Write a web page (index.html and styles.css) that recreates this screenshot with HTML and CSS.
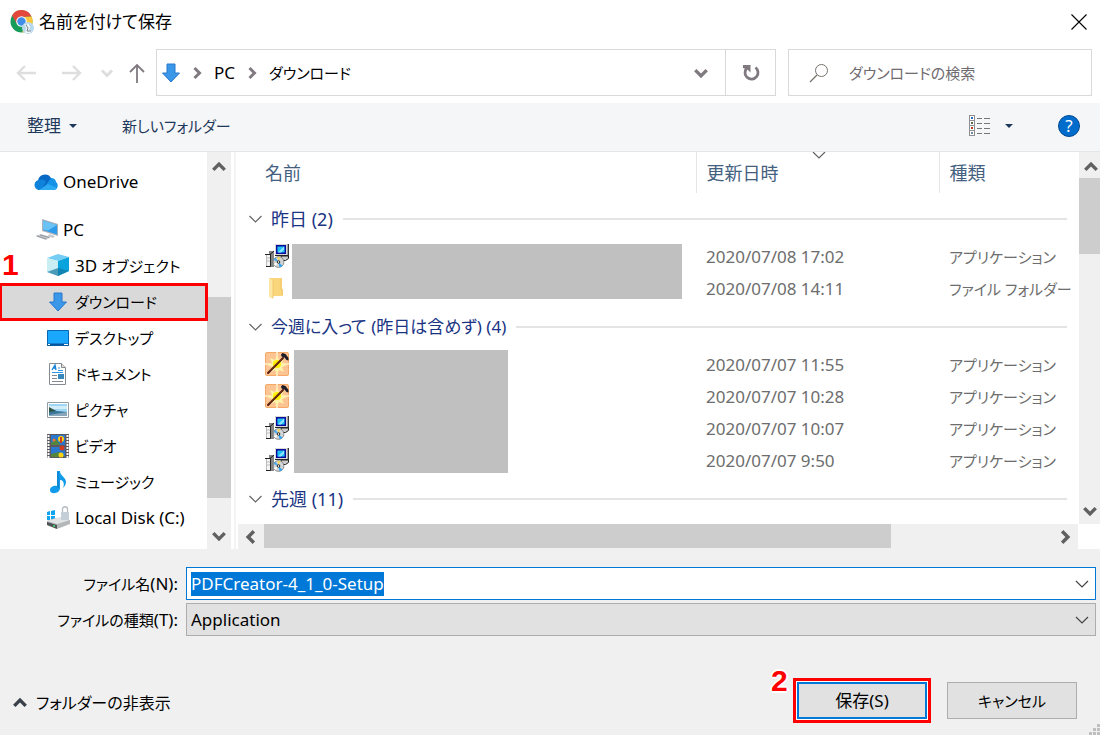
FILE: index.html
```html
<!DOCTYPE html>
<html lang="ja">
<head>
<meta charset="utf-8">
<title>名前を付けて保存</title>
<meta name="viewport" content="width=device-width, initial-scale=1">
<link rel="stylesheet" href="styles.css">
</head>
<body>
<svg class="defs" aria-hidden="true">
  <symbol id="down-arrow" viewBox="0 0 18 20"><path d="M5 1h8v9h4.500L9 19 .5 10H5z" fill="#3b98e8" stroke="#2878cd"/></symbol>
  <symbol id="bold-chevron" viewBox="0 0 14 14"><path d="M2 4.500 7 9.500l5-5" fill="none" stroke="currentColor" stroke-width="3"/></symbol>
  <symbol id="thin-chevron" viewBox="0 0 14 14"><path d="M1 4 7 10l6-6" fill="none" stroke="currentColor" stroke-width="1.200"/></symbol>
  <symbol id="installer" viewBox="0 0 24 24">
    <path d="M10 0h13v11H10z" fill="#d8d8d8"/><path d="M23.300 0v11.500H10" fill="none" stroke="#222" stroke-width="1.200"/>
    <path d="M11.700 1.700h8.600v7.600h-8.600z" fill="#1ec0f5" stroke="#0a0a9c" stroke-width="1.400"/><path d="M13 8.500l6-6v3l-3 3z" fill="#8fe6ff"/>
    <path d="M4 7h5v16H1V10h3z" fill="#858585"/><path d="M1.500 11h3.500v11H1.500z" fill="#f4f4f4"/><path d="M2 14h3M2 17h3" stroke="#bbb"/><path d="M5.500 10v12.500H1M0 10.500h5L9 7" stroke="#222" fill="none"/>
    <path d="M16 12h7.500v2.500l-3 2h-4z" fill="#ccc" stroke="#222"/>
    <circle cx="13.500" cy="18" r="5.400" fill="#d2d4d6" stroke="#777" stroke-width=".8"/><path d="M13.500 18 8.500 16l2-2.500z" fill="#48a8e8"/><path d="M13.500 18l-1-5h3z" fill="#f0d660"/><path d="M13.500 18l4 4-3 1.300z" fill="#26a2f4"/><path d="M13.500 18l-5 2 2 2z" fill="#fff"/>
    <circle cx="13.500" cy="18" r="1.300" fill="#fff" stroke="#222"/>
  </symbol>
  <symbol id="hammer" viewBox="0 0 24 24">
    <rect x=".5" y=".5" width="23" height="23" rx="1.500" fill="#fcc393" stroke="#f7a864"/>
    <path d="M11 0h2v24h-2zM0 11h24v2H0z" fill="#fde3b8"/>
    <path d="m12 3 2 5 5-2-2 5 5 2-5 2 2 5-5-2-2 5-2-5-5 2 2-5-5-2 5-2-2-5 5 2z" fill="#fff3a8"/><circle cx="12" cy="12" r="4" fill="#fff000"/>
    <path d="M3 21 18 6" stroke="#4a170c" stroke-width="2" stroke-linecap="round"/><path d="M4 19.500 17 6.500" stroke="#a24b1d" stroke-width=".8"/>
    <path d="m16 2.500 1.500-1.500 3 1L23.500 6v2.500l-2-.5-2-2.500-3-1z" fill="#1c1d2b"/>
  </symbol>
</svg>

<header class="titlebar">
  <svg class="app-icon" viewBox="0 0 24 24" aria-hidden="true">
    <circle cx="11.500" cy="11.500" r="11" fill="#179c5a"/>
    <path d="M2 5.500A11 11 0 0 1 21.500 6.500L11.500 7 7 14z" fill="#e2493c"/>
    <path d="M21.500 6.500A11 11 0 0 1 12 22.500l4-9L13 7z" fill="#fdc83e"/>
    <circle cx="11.500" cy="11.500" r="5.300" fill="#fff"/><circle cx="11.500" cy="11.500" r="4.200" fill="#3f8de8"/>
    <circle cx="18" cy="18" r="6" fill="#b7d9ed"/><path d="m14 14 3 1 1-2 2 4-1 3 3 1-2 2h-5l1-5z" fill="#f4f6f5"/><path d="m16 15 2 3-1 3h4" fill="none" stroke="#688292"/>
  </svg>
  <h1>名前を付けて保存</h1>
  <button class="close" aria-label="閉じる"><svg viewBox="0 0 16 16"><path d="m.5.500 15 15m0-15-15 15" stroke="#000" stroke-width="1.100"/></svg></button>
</header>

<nav class="navbar">
  <div class="history">
    <button class="faded" aria-label="戻る"><svg viewBox="0 0 20 18"><path d="M20 9H2m7-7L2 9l7 7" fill="none" stroke="currentColor" stroke-width="2.400"/></svg></button>
    <button class="faded" aria-label="進む"><svg viewBox="0 0 20 18"><path d="M0 9h18m-7-7 7 7-7 7" fill="none" stroke="currentColor" stroke-width="2.400"/></svg></button>
    <button class="faded recent" aria-label="最近の場所"><svg viewBox="0 0 14 14"><use href="#bold-chevron"/></svg></button>
    <button class="up" aria-label="上へ"><svg viewBox="0 0 18 20"><path d="M9 20V2M2 9l7-7 7 7" fill="none" stroke="currentColor" stroke-width="1.800"/></svg></button>
  </div>
  <div class="address">
    <svg class="address-icon" aria-hidden="true"><use href="#down-arrow"/></svg>
    <svg class="crumb-sep" aria-hidden="true"><use href="#bold-chevron"/></svg>
    <a href="#pc">PC</a>
    <svg class="crumb-sep" aria-hidden="true"><use href="#bold-chevron"/></svg>
    <a href="#downloads" class="kana">ダウンロード</a>
    <button class="address-drop" aria-label="以前の場所"><svg><use href="#bold-chevron"/></svg></button>
    <button class="refresh" aria-label="更新"><svg viewBox="0 0 18 18"><path d="M13.500 3.500A6.500 6.500 0 1 1 4.500 4.500" fill="none" stroke="currentColor" stroke-width="2.800"/><path d="M1 1h7.500v7.500L6 6 4 5 1 4z" fill="currentColor"/></svg></button>
  </div>
  <div class="search">
    <svg viewBox="0 0 20 20" aria-hidden="true"><path d="M1 19l7-7" stroke="currentColor" stroke-width="1.200"/><circle cx="12.500" cy="7.500" r="6" fill="none" stroke="currentColor"/></svg>
    <input type="text" class="kana" placeholder="ダウンロードの検索" aria-label="ダウンロードの検索">
  </div>
</nav>

<div class="toolbar">
  <button>整理<span class="triangle"></span></button>
  <button class="kana">新しいフォルダー</button>
  <button class="view" aria-label="表示方法の変更"><svg viewBox="0 0 22 22" shape-rendering="crispEdges"><path d="M.5.500h5v20h-5zM.5 5.500h5M.5 10.500h5M.5 15.500h5" fill="#fff" stroke="#8e8e92"/><path d="M8 3.500h5m2 0h6M8 8.500h5m2 0h6M8 13.500h5m2 0h6M8 18.500h5m2 0h6" stroke="#77757a"/><path d="M2 2h2v2H2z" fill="#2470bc"/><path d="M2 7h2v2H2z" fill="#665"/><path d="M2 12h2v2H2z" fill="#c43b18"/><path d="M2 17h2v2H2z" fill="#789"/></svg><span class="triangle"></span></button>
  <button class="help" aria-label="ヘルプ">?</button>
</div>

<main class="browser">
  <aside class="sidebar">
    <ul class="tree">
      <li class="top"><svg viewBox="0 0 24 24"><path d="M5 20a5 5 0 0 1-1-9 7 7 0 0 1 13-3l3 6-8 6z" fill="#0869c4"/><path d="M5 20a5 5 0 0 1 1-10c3-1 5 0 6 2l-5 8z" fill="#0f82dc"/><path d="M17 8c3 0 5 2 5 4 3 2 2 8-2 8H6l6-5 5-7z" fill="#1593e9"/><path d="m5 20 9-6 9 4c-1 1-2 2-4 2z" fill="#2caaf2"/></svg>OneDrive</li>
      <li class="top pc"><svg viewBox="0 0 24 24"><path d="m7 1 16 5v12L7 13z" fill="#aab1b7"/><path d="m8 2.500 14 4.500v9.500L8 12z" fill="#2e9cea"/><path d="m8 2.500 14 4.500-9 5.500-5-1z" fill="#6bc2f4"/><path d="m14 16 6 2-2 2-5-2zM0 18l6-2 10 3-5 3z" fill="#c6cacd"/><path d="m2 18 9 3M5 17l9 2.500" stroke="#858b92" stroke-width=".8"/></svg>PC</li>
      <li><svg viewBox="0 0 24 24"><path d="m1 4 11-4 11 3-11 4z" fill="#74cdf3"/><path d="m1 4 11 3v15L1 18z" fill="#c8eef3"/><path d="m12 7 11-4v14l-11 5z" fill="#08a2dd"/><path d="m1 18 11-4 11 3-11 5z" fill="#14789f" opacity=".7"/></svg><span>3D <span class="kana">オブジェクト</span></span></li>
      <li class="selected"><svg viewBox="0 0 24 22"><use href="#down-arrow" x="3" y="1" width="18" height="20"/></svg><span class="kana">ダウンロード</span></li>
      <li><svg viewBox="0 0 24 24"><path d="M1.500 4.500h21v15h-21z" fill="#1aa8fc" stroke="#0767b2"/><path d="M1 18.500h22" stroke="#08539a" stroke-width="2"/><path d="M2 18.500h2m14 0h4" stroke="#fff"/></svg><span class="kana">デスクトップ</span></li>
      <li><svg viewBox="0 0 24 24"><path d="M3.500 1.500h12l4 4v17h-16z" fill="#fff" stroke="#858b91"/><path d="M15.500 1.500v4h4" fill="#ddd" stroke="#858b91"/><path d="m6 8 3-5 1 5M7 6h3" fill="none" stroke="#1484d8" stroke-width="1.300"/><path d="M12 6h2m-2 2.500h5M6 10.500h11" stroke="#3097e4"/><path d="M6 13.500h5m-5 3h5m-5 3h11" stroke="#858b91"/><path d="M12 12h6v5h-6z" fill="#3589bc"/></svg><span class="kana">ドキュメント</span></li>
      <li><svg viewBox="0 0 24 24"><path d="M1.500 4.500h21v15h-21z" fill="#fff" stroke="#949ca3"/><path d="M3 6h18v12H3z" fill="#9ed6f6"/><path d="M3 8h18v3H3z" fill="#d2edf8"/><path d="m3 10 8 3 10 1v4H3z" fill="#3a7798"/><path d="m3 9 7 4-7 1z" fill="#315343"/><path d="M3 17 21 14v4H3z" fill="#88a6bc"/></svg><span class="kana">ピクチャ</span></li>
      <li><svg viewBox="0 0 24 24"><path d="M1 0h22v24H1z" fill="#5e5860"/><path d="M2.500 1v23M21.500 1v23" stroke="#fff" stroke-width="2" stroke-dasharray="2 1"/><path d="M5 1h14v10H5zM5 13h14v10H5z" fill="#2879cd"/><path d="m5 9 5-4 4 6H5zM5 23v-3l8-2 6 5z" fill="#53863c"/><circle cx="15" cy="5" r="3" fill="#ffd316"/><path d="M14 3h2v6h-2z" fill="#d13c20"/><circle cx="16" cy="14" r="2.500" fill="#d13c20"/><circle cx="15" cy="21" r="2.500" fill="#ffd316"/><circle cx="8" cy="6" r="1.500" fill="#ee713e"/></svg><span class="kana">ビデオ</span></li>
      <li><svg viewBox="0 0 24 24"><path d="M11 1h3c0 5 6 6 6 11 0 3-2 5-3 6 2-5 0-8-3-8v8c0 6-10 7-10 2 0-3 4-5 7-4z" fill="#129bea"/><path d="M12 2v16" stroke="#0878c0"/></svg><span class="kana">ミュージック</span></li>
      <li><svg viewBox="0 0 24 24"><path d="m1 6 3-1v4H1zm4-1 4-1v5H5zM1 10h3v4H1zm4 0h4v5H5z" fill="#10a4f2"/><path d="m1 15 8-3 15 2v4l-13 5-10-4z" fill="#b3b7ba"/><path d="m1 15 10 3 13-4-10-3z" fill="#e2e3e4"/><path d="m1 16 10 3v4L1 19z" fill="#4d5356"/><circle cx="8" cy="20" r="1" fill="#4ae56f"/><path d="M16.500 6V3c0-3 5-3 5 0v4" fill="none" stroke="#b6bbc0" stroke-width="1.300"/><path d="M15 6h8v8h-8z" fill="#c3ced6"/></svg>Local Disk (C:)</li>
    </ul>
    <div class="scroll-v side-scroll"><button aria-label="上へスクロール"><svg class="turn"><use href="#bold-chevron"/></svg></button><div class="thumb"></div><button aria-label="下へスクロール"><svg><use href="#bold-chevron"/></svg></button></div>
    <strong class="callout callout-one">1</strong>
  </aside>

  <section class="content">
    <div class="pane">
      <div class="files">
        <table>
          <colgroup><col class="c-icon"><col class="c-name"><col class="c-date"><col></colgroup>
          <thead><tr><th colspan="2" class="h-name">名前</th><th class="sorted">更新日時<svg aria-hidden="true"><use href="#thin-chevron"/></svg></th><th>種類</th></tr></thead>
          <tbody>
            <tr class="group first"><th colspan="4"><div><svg><use href="#thin-chevron"/></svg><span>昨日 (2)</span></div></th></tr>
            <tr><td class="icon"><svg><use href="#installer"/></svg></td><td rowspan="2"><div class="mask mask-wide"></div></td><td>2020/07/08 17:02</td><td class="kana">アプリケーション</td></tr>
            <tr><td class="icon"><svg viewBox="0 0 24 24"><path d="M4 2h13v11h1v7H4z" fill="#f9d67b"/><path d="m4 2 4 2v19l-4-2z" fill="#fbe6a3"/><path d="M8 4v18M16 3v10h1v6" fill="none" stroke="#f3c76c"/></svg></td><td>2020/07/08 14:11</td><td class="kana">ファイル フォルダー</td></tr>
          </tbody>
          <tbody>
            <tr class="group"><th colspan="4"><div><svg><use href="#thin-chevron"/></svg><span class="mixed">今週に入って (昨日は含めず) (4)</span></div></th></tr>
            <tr><td class="icon"><svg><use href="#hammer"/></svg></td><td rowspan="4"><div class="mask mask-tall"></div></td><td>2020/07/07 11:55</td><td class="kana">アプリケーション</td></tr>
            <tr><td class="icon"><svg><use href="#hammer"/></svg></td><td>2020/07/07 10:28</td><td class="kana">アプリケーション</td></tr>
            <tr><td class="icon"><svg><use href="#installer"/></svg></td><td>2020/07/07 10:07</td><td class="kana">アプリケーション</td></tr>
            <tr><td class="icon"><svg><use href="#installer"/></svg></td><td>2020/07/07 9:50</td><td class="kana">アプリケーション</td></tr>
          </tbody>
          <tbody>
            <tr class="group"><th colspan="4"><div><svg><use href="#thin-chevron"/></svg><span>先週 (11)</span></div></th></tr>
          </tbody>
        </table>
      </div>
      <div class="scroll-v main-scroll"><button aria-label="上へスクロール"><svg class="turn"><use href="#bold-chevron"/></svg></button><div class="thumb"></div><button aria-label="下へスクロール"><svg><use href="#bold-chevron"/></svg></button></div>
    </div>
    <div class="scroll-h"><button aria-label="左へスクロール"><svg class="left"><use href="#bold-chevron"/></svg></button><div class="track"><div class="thumb"></div></div><button aria-label="右へスクロール"><svg class="right"><use href="#bold-chevron"/></svg></button></div>
  </section>
</main>

<footer class="form">
  <div class="field">
    <label for="filename"><span class="kana">ファイル名</span>(N):</label>
    <div class="combo active"><input id="filename" type="text" value="PDFCreator-4_1_0-Setup" autofocus onfocus="this.select()"><svg aria-hidden="true"><use href="#thin-chevron"/></svg></div>
  </div>
  <div class="field">
    <label for="filetype"><span class="kana">ファイルの種類</span>(T):</label>
    <div class="combo"><select id="filetype"><option>Application</option></select><svg aria-hidden="true"><use href="#thin-chevron"/></svg></div>
  </div>
  <div class="actions">
    <button class="hide"><svg class="turn"><use href="#bold-chevron"/></svg>フォルダーの非表示</button>
    <div class="save-wrap"><strong class="callout callout-two">2</strong><button class="btn save">保存(S)</button></div>
    <button class="btn kana">キャンセル</button>
  </div>
  <svg class="grip" viewBox="0 0 11 11" aria-hidden="true"><path d="M8 0h3v3H8zM4 4h3v3H4zm4 0h3v3H8zM0 8h3v3H0zm4 0h3v3H4zm4 0h3v3H8z" fill="#bfbfbf"/></svg>
</footer>
</body>
</html>
```
FILE: styles.css
```css
* { box-sizing: border-box; }

body {
  margin: 0;
  min-height: 100vh;
  display: flex;
  flex-direction: column;
  background: #fff;
  color: #000;
  font-family: "Noto Sans", "Noto Sans CJK JP", sans-serif;
  font-size: 17px;
  line-height: 24px;
  font-feature-settings: "palt";
  white-space: nowrap;
}

svg { display: block; flex: none; }
.defs { position: absolute; width: 0; height: 0; }
.turn { transform: rotate(180deg); }
.left { transform: rotate(90deg); }
.right { transform: rotate(-90deg); }

button, input, select {
  font: inherit;
  font-feature-settings: inherit;
  color: inherit;
  padding: 0;
  border: 0;
  background: none;
}

button { display: flex; align-items: center; justify-content: center; }
a { color: inherit; text-decoration: none; }
.kana { font-size: 15px; }

.titlebar { display: flex; align-items: center; height: 44px; padding: 0 13px 0 10px; gap: 5px; }
.titlebar h1 { margin: 0; flex: 1; font-size: 17px; font-weight: 400; }
.app-icon { width: 24px; height: 24px; }
.close svg { width: 16px; height: 16px; }

.navbar { display: flex; align-items: center; height: 59px; padding: 0 8px 2px 16px; }
.history { display: flex; align-items: center; width: 140px; color: #807980; }
.history button { margin-right: 26px; }
.history button svg { width: 20px; height: 18px; }
.history .faded { color: #dedede; }
.history button.recent { margin: 0 14px 0 -8px; }
.history .recent svg { width: 14px; height: 14px; }
.history .up { margin: 0; }
.history .up svg { width: 18px; height: 20px; }

.address { display: flex; align-items: center; flex: 1; height: 47px; border: 1px solid #d9d9d9; padding-left: 5px; gap: 10px; }
.address-icon { width: 18px; height: 20px; }
.crumb-sep { width: 14px; height: 14px; transform: rotate(-90deg); color: #807980; }
.address-drop { margin-left: auto; width: 24px; margin-right: 2px; color: #807980; }
.address-drop svg { width: 16px; height: 16px; }
.refresh { width: 50px; height: 100%; border-left: 1px solid #d9d9d9; color: #807980; }
.refresh svg { width: 18px; height: 18px; }

.search { display: flex; align-items: center; width: 304px; height: 47px; margin-left: 12px; padding-left: 20px; gap: 20px; border: 1px solid #d9d9d9; color: #77736c; }
.search svg { width: 20px; height: 20px; }
.search input { flex: 1; min-width: 0; outline: 0; }
.search input::placeholder { color: #706c70; opacity: 1; }

.toolbar { display: flex; align-items: center; height: 49px; padding: 0 20px 2px 27px; background: #f5f6f8; border-bottom: 1px solid #e6e6e6; color: #1e395b; }
.toolbar button { margin-right: 45px; }
.triangle { border: 4px solid transparent; border-top-color: #1e395b; border-bottom: 0; margin-left: 8px; }
.toolbar .view { margin: 0 45px 0 auto; }
.view svg { width: 22px; height: 22px; }
.view .triangle { margin-left: 14px; }
.toolbar .help { width: 22px; height: 22px; margin: 0; border-radius: 50%; border: 1px solid #004894; background: #006dcc; color: #fff; }

.browser { display: flex; height: 397px; }
.sidebar { position: relative; display: flex; width: 236px; border-right: 2px solid #f4f4f4; }
.tree { flex: 1; margin: 0; padding: 12px 0 0; list-style: none; }
.tree li { display: flex; align-items: center; height: 36px; padding-left: 46px; gap: 5px; }
.tree .top { padding-left: 34px; }
.tree .pc { margin-top: 12px; padding-left: 35px; gap: 4px; }
.tree li svg { width: 24px; height: 24px; }
.tree .selected { position: relative; background: #d9d9d9; outline: 3px solid #f00; outline-offset: -2px; }

.callout { position: absolute; color: #f00; font: bold 30px/30px "Liberation Sans", sans-serif; text-shadow: 2px 0 #fff, -2px 0 #fff, 0 2px #fff, 0 -2px #fff; }
.callout-one { left: 2px; top: 98px; }

.scroll-v { display: flex; flex-direction: column; background: #f0f0f0; color: #606060; }
.scroll-v button { height: 26px; padding-top: 4px; }
.scroll-v svg, .scroll-h svg { width: 16px; height: 16px; }
.thumb { background: #cdcdcd; }
.side-scroll { width: 24px; margin-right: 3px; }
.side-scroll .thumb { height: 201px; margin-top: 119px; }
.scroll-v button:last-child { margin-top: auto; padding: 0; }
.content { flex: 1; min-width: 0; display: flex; flex-direction: column; }
.pane { display: flex; flex: 1; min-height: 0; }
.files { flex: 1; min-width: 0; overflow: hidden; }
.main-scroll { width: 21px; }
.main-scroll button { padding-left: 2px; }
.main-scroll .thumb { height: 76px; }
.scroll-h { display: flex; height: 25px; margin: 0 22px 0 2px; background: #f0f0f0; color: #606060; }
.scroll-h button { width: 26px; }
.track { flex: 1; }
.track .thumb { width: 79.6%; height: 24px; }

table { width: 100%; table-layout: fixed; border-collapse: collapse; color: #6d6d6d; }
.c-icon { width: 56px; }
.c-name { width: 404px; }
.c-date { width: 243px; }
th, td { padding: 0 0 0 10px; font-weight: 400; text-align: left; }
th { font-size: 18px; }
thead th { height: 41px; color: #43617f; border-left: 1px solid #e5e5e5; }
thead .h-name { padding-left: 29px; border: 0; }
.sorted { position: relative; }
.sorted svg { position: absolute; left: 115px; top: -4px; width: 14px; height: 14px; color: #606060; }
tbody tr { height: 32px; }
tbody td { height: 32px; }
tbody .icon { padding: 0 0 2px 29px; }
.icon svg { width: 24px; height: 24px; }
td[rowspan] { padding: 0 0 4px; }
.mask { background: #c0c0c0; }
.mask-wide { width: 390px; height: 55px; }
.mask-tall { width: 214px; height: 123px; margin-left: 2px; }
.group th { height: 44px; padding: 0 12px; color: #1a3484; }
.group.first th { height: 48px; padding-top: 4px; }
.group div { display: flex; align-items: center; gap: 8px; }
.group svg { width: 15px; height: 14px; color: #666; }
.group div::after { content: ""; flex: 1; height: 2px; margin-left: 2px; background: #e4e4e4; }
.mixed { font-size: 17px; }

.form { position: relative; flex: 1; display: flex; flex-direction: column; gap: 3px; background: #f0f0f0; padding: 18px 4px 0 0; }
.field { display: flex; align-items: center; gap: 8px; }
.field label { width: 178px; text-align: right; }
.combo { position: relative; flex: 1; height: 33px; border: 1px solid #adadad; background: #e1e1e1; display: flex; align-items: center; padding: 0 6px 0 4px; }
.combo.active { border-color: #0078d7; background: #fff; }
.combo input, .combo select { flex: 1; min-width: 0; outline: 0; appearance: none; }
.combo svg { width: 14px; height: 14px; color: #444; pointer-events: none; }
.combo input::selection { background: #0078d7; color: #fff; }

.actions { display: flex; align-items: center; margin-top: 43px; padding: 0 19px 0 12px; gap: 20px; }
.hide { gap: 8px; margin: 5px auto 0 0; font-size: 16px; }
.hide svg { width: 16px; height: 16px; color: #38404a; }
.save-wrap { position: relative; }
.btn { width: 130px; height: 37px; background: #e1e1e1; border: 1px solid #adadad; }
.save { border: 2px solid #0078d7; font-size: 17px; box-shadow: 0 0 0 1px #fff, 0 0 0 4px #f00; }
.callout-two { left: -26px; top: -16px; }
.grip { position: absolute; right: 0; bottom: 0; width: 11px; height: 11px; }
```
